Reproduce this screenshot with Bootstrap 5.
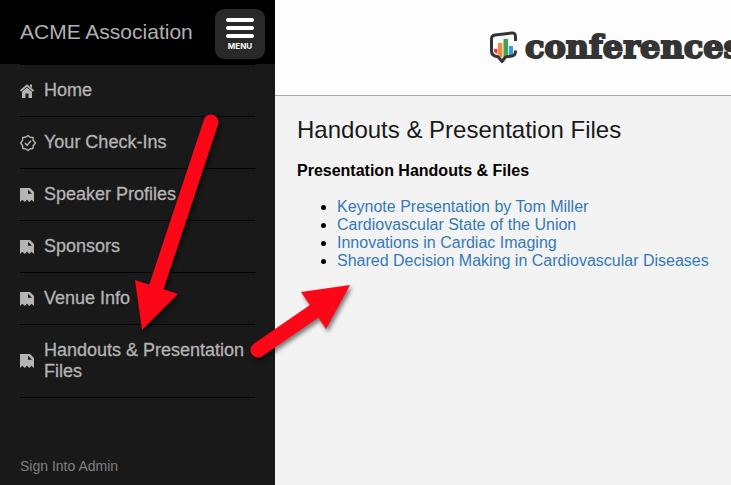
<!DOCTYPE html>
<html lang="en">
<head>
<meta charset="utf-8">
<meta name="viewport" content="width=device-width, initial-scale=1">
<title>Handouts &amp; Presentation Files</title>
<link href="https://cdn.jsdelivr.net/npm/bootstrap@5.3.0/dist/css/bootstrap.min.css" rel="stylesheet">
<style>
  body { font-family: "Liberation Sans", Arial, sans-serif; background: #f3f3f3; color: #000; }
  .sidebar { width: 275px; background: #191919; }
  .side-head { height: 64px; background: #000; padding: 0 10px 0 20px; }
  .org-name { font-size: 21px; line-height: 24px; color: #b0b0b0; }
  .menu-btn { width: 50px; height: 50px; background: #292929; border: 0; border-radius: 9px; margin-top: 4px; }
  .menu-btn:hover { background: #333; }
  .menu-label { font: 700 8px/10px Inter, "Open Sans", sans-serif; color: #fff; margin-top: 2px; }
  .side-list { margin: 0 20px; border-top: 1px solid #000; }
  .side-list li { border-bottom: 1px solid #000; }
  .side-link { padding: 15px 0; gap: 10px; font-size: 18px; line-height: 21px; color: #b4b4b4; -webkit-text-stroke: 0.3px #b4b4b4; margin-right: -10px; }
  .side-link svg { width: 14px; height: 14px; overflow: visible; }
  .admin-link { font-size: 14px; line-height: 18px; color: #808080; padding: 0 20px 10px; }
  .brand-bar { height: 96px; background: #fdfdfd; border-bottom: 1px solid #aaa; }
  .brand { width: 242px; gap: 8px; padding-bottom: 2px; }
  .brand-name { font: 700 32px/40px "DejaVu Serif", serif; color: #343434; -webkit-text-stroke: 2px #343434; }
  .page-body { padding: 20px 22px; font-size: 16px; line-height: 18px; }
  .page-title { font-size: 24px; line-height: 28px; color: #191919; margin-bottom: 17px; }
  .sub-title { font-size: 16px; line-height: 20px; margin-bottom: 17px; }
  .files { padding-left: 40px; }
  .files a { color: #337ab7; }
  .callouts { z-index: 5; filter: drop-shadow(2px 3px 2px rgba(0,0,0,.5)); }
</style>
<script defer src="https://cdn.jsdelivr.net/npm/bootstrap@5.3.0/dist/js/bootstrap.bundle.min.js"></script>
</head>
<body>
<svg width="0" height="0" class="position-absolute" aria-hidden="true">
  <symbol id="page" viewBox="0 0 14 14"><path fill="#b4b4b4" fill-rule="evenodd" d="M0 0H10L14 4V14L11.500 11.800L9.300 14L7 11.800L4.700 14L2.400 11.800L0 14ZM8 1.800V5.800H12Z"/></symbol>
</svg>
<div class="d-flex min-vh-100 position-relative overflow-hidden">
  <aside class="sidebar flex-shrink-0 d-flex flex-column">
    <div class="side-head d-flex align-items-center justify-content-between">
      <span class="org-name">ACME Association</span>
      <button type="button" class="menu-btn p-0 d-flex flex-column align-items-center justify-content-center">
        <svg width="28" height="22" viewBox="0 0 28 22" aria-hidden="true"><path stroke="#fff" stroke-width="4" stroke-linecap="round" d="M2 3H26M2 11H26M2 19H26"/></svg>
        <span class="menu-label">MENU</span>
      </button>
    </div>
    <nav>
      <ul class="side-list list-unstyled">
        <li><a href="#" class="side-link d-flex align-items-center text-decoration-none">
          <svg class="flex-shrink-0" viewBox="0 0 14 14" aria-hidden="true"><path d="M.5 7L7 1.400L13.500 7" fill="none" stroke="#b4b4b4" stroke-width="1.800"/><path fill="#b4b4b4" d="M10 .5H12V4L10 2.300ZM2 7.800L7 3.500L12 7.800V14H8.500V9.500H5.500V14H2Z"/></svg>Home</a></li>
        <li><a href="#" class="side-link d-flex align-items-center text-decoration-none">
          <svg class="flex-shrink-0" viewBox="0 0 14 14" aria-hidden="true"><g fill="none" stroke="#b4b4b4" stroke-width="1.400" stroke-linejoin="round"><path d="M8 -.5L10.200 1.300L13 1.500L13.200 4.300L15.500 7L13.200 9.700L13 12.500L10.200 12.700L8 14.500L5.500 12.700L2.800 12.500L2.600 9.700L.7 7L2.600 4.300L2.800 1.500L5.500 1.300Z"/><path d="M5 7L7.200 9.200L11 4.800"/></g></svg>Your Check-Ins</a></li>
        <li><a href="#" class="side-link d-flex align-items-center text-decoration-none"><svg class="flex-shrink-0" aria-hidden="true"><use href="#page"/></svg>Speaker Profiles</a></li>
        <li><a href="#" class="side-link d-flex align-items-center text-decoration-none"><svg class="flex-shrink-0" aria-hidden="true"><use href="#page"/></svg>Sponsors</a></li>
        <li><a href="#" class="side-link d-flex align-items-center text-decoration-none"><svg class="flex-shrink-0" aria-hidden="true"><use href="#page"/></svg>Venue Info</a></li>
        <li><a href="#" class="side-link d-flex align-items-center text-decoration-none"><svg class="flex-shrink-0" aria-hidden="true"><use href="#page"/></svg>Handouts &amp; Presentation Files</a></li>
      </ul>
    </nav>
    <a href="#" class="admin-link mt-auto text-decoration-none">Sign Into Admin</a>
  </aside>
  <div class="flex-grow-1">
    <header class="brand-bar d-flex align-items-center justify-content-end overflow-hidden">
      <div class="brand d-flex align-items-center flex-shrink-0">
        <svg class="flex-shrink-0" width="28" height="34" viewBox="0 0 28 34" aria-hidden="true">
          <path fill="#f03a32" d="M5 19H8.500V24L5 22Z"/><path fill="#f58a3c" d="M9 13H13.500V28L9 24.500Z"/><path fill="#3da651" d="M14.500 9H19V25.500L14.500 27Z"/><path fill="#2b9fe0" d="M20 16H24V25H20Z"/>
          <path fill="none" stroke="#343434" stroke-width="3" stroke-linejoin="round" d="M26.500 11V6.500Q26.500 2.500 22.500 3L6 5Q2.500 5.500 2.500 9V21Q2.500 25 6 26L9.500 27L13 31.500L16.500 27L23 26Q26.500 25.500 26.500 21V20.500"/>
        </svg>
        <span class="brand-name">conferences</span>
      </div>
    </header>
    <main class="page-body">
      <h1 class="page-title fw-normal">Handouts &amp; Presentation Files</h1>
      <h2 class="sub-title fw-bold">Presentation Handouts &amp; Files</h2>
      <ul class="files mb-0">
        <li><a href="#" class="text-decoration-none">Keynote Presentation by Tom Miller</a></li>
        <li><a href="#" class="text-decoration-none">Cardiovascular State of the Union</a></li>
        <li><a href="#" class="text-decoration-none">Innovations in Cardiac Imaging</a></li>
        <li><a href="#" class="text-decoration-none">Shared Decision Making in Cardiovascular Diseases</a></li>
      </ul>
    </main>
  </div>
  <svg class="callouts position-absolute top-0 start-0 pe-none" width="360" height="380" viewBox="0 0 360 380" aria-hidden="true">
    <g stroke="#fd0617" stroke-width="15" stroke-linecap="round"><path d="M211 122L156 288"/><path d="M258 350L316 310"/></g>
    <g fill="#fd0617"><path d="M142 330L135 280L178 294Z"/><path d="M350 285L301 292L326 329Z"/></g>
  </svg>
</div>
</body>
</html>
